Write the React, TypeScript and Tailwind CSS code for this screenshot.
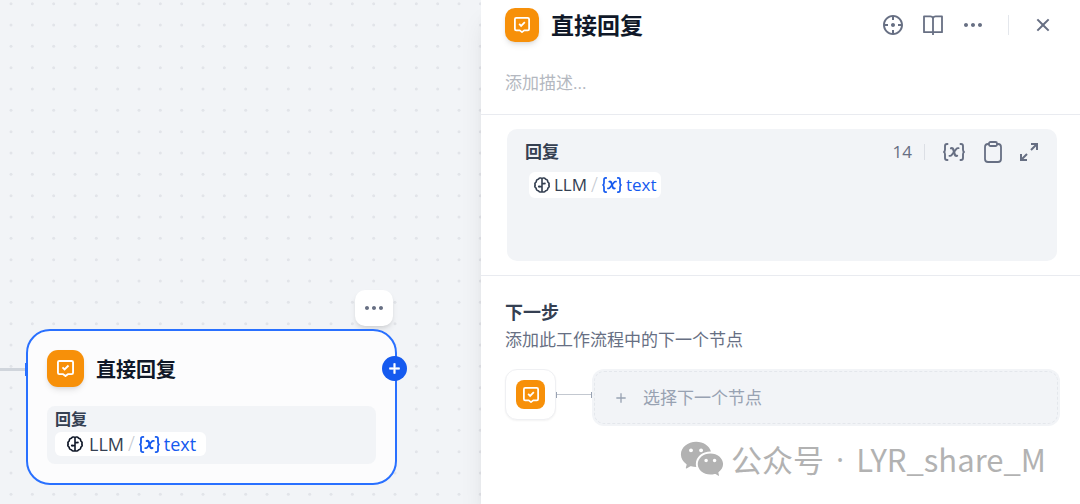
import type { ReactNode } from "react";
import {
  RiAddLine,
  RiCloseLine,
  RiCrosshairLine,
  RiMoreFill,
  RiWechatFill,
} from "react-icons/ri";

type IconProps = { className?: string };

function AnswerIcon({ className }: IconProps) {
  return (
    <svg viewBox="0 0 18 18" fill="none" stroke="currentColor" strokeWidth="2" strokeLinejoin="round" strokeLinecap="round" className={className}>
      <path d="M2.500 1h13A1.500 1.500 0 0 1 17 2.500v11a1.500 1.500 0 0 1-1.500 1.500h-4L9 17l-2.500-2h-4A1.500 1.500 0 0 1 1 13.500v-11A1.500 1.500 0 0 1 2.500 1z" />
      <path d="M5.800 7.800l2.200 2.200 4.200-4.200" strokeLinecap="butt" strokeLinejoin="miter" />
    </svg>
  );
}

function BrainIcon({ className }: IconProps) {
  return (
    <svg viewBox="0 0 16 16" fill="none" stroke="currentColor" strokeWidth="1.600" strokeLinejoin="round" className={className}>
      <path d="M8 1.400c-1.300-.9-3 -.3-3.500.8-1.500.1-2.400 1.300-2.200 2.600C1 5.700.6 7 1.200 8c-.6 1.100-.2 2.500 1 3.200-.1 1.300.9 2.500 2.300 2.600.6 1.100 2.200 1.700 3.500.8 1.300.9 2.900.3 3.500-.8 1.400-.1 2.400-1.300 2.300-2.600 1.200-.7 1.600-2.100 1-3.200.6-1 .2-2.300-1.100-3.200.2-1.300-.7-2.500-2.200-2.600C11 1.100 9.300.5 8 1.400z" />
      <path d="M8 1.400v13.200M8 6.600h2.200M8 9.600H5.200" />
      <circle cx="10.800" cy="6.600" r="1" fill="currentColor" stroke="none" />
      <circle cx="5" cy="9.600" r="1.100" fill="currentColor" stroke="none" />
    </svg>
  );
}

function VariableIcon({ className }: IconProps) {
  return (
    <svg viewBox="0 0 22 18" fill="none" stroke="currentColor" strokeWidth="1.900" strokeLinecap="round" strokeLinejoin="round" className={className}>
      <path d="M4.500 1H4a2 2 0 0 0-2 2v3.500C2 8 1.600 8.600 1 9c.6.400 1 1 1 2.500V15a2 2 0 0 0 2 2h.5" />
      <path d="M17.500 1h.5a2 2 0 0 1 2 2v3.500c0 1.500.4 2.100 1 2.500-.6.400-1 1-1 2.500V15a2 2 0 0 1-2 2h-.5" />
      <path d="M8 5.200c1.300-.3 2 .2 2.300 1.200l1.500 5.200c.3 1 1 1.500 2.300 1.200" strokeWidth="2.200" />
      <path d="M15.600 5.200c-1-.3-1.800.1-2.400.9l-4.400 5.800c-.6.800-1.400 1.200-2.400.9" strokeWidth="1.800" />
    </svg>
  );
}

function BookIcon({ className }: IconProps) {
  return (
    <svg viewBox="0 0 20 20" fill="none" stroke="currentColor" strokeWidth="1.800" strokeLinejoin="round" className={className}>
      <path d="M10 3.200C9.600 2 8.600 1.400 7.400 1.400H1v15.800h9h9V1.400h-6.400c-1.200 0-2.200.6-2.600 1.800zM10 3v17" />
    </svg>
  );
}

function ClipboardIcon({ className }: IconProps) {
  return (
    <svg viewBox="0 0 18 22" fill="none" stroke="currentColor" strokeWidth="1.800" strokeLinejoin="round" className={className}>
      <path d="M5 3H4a3 3 0 0 0-3 3v12a3 3 0 0 0 3 3h10a3 3 0 0 0 3-3V6a3 3 0 0 0-3-3h-1" />
      <rect x="5" y="1" width="8" height="4" rx="1.500" />
    </svg>
  );
}

function ExpandIcon({ className }: IconProps) {
  return (
    <svg viewBox="0 0 18 18" fill="none" stroke="currentColor" strokeWidth="2" className={className}>
      <path d="M11 1h6v6M17 1l-6 6M7 17H1v-6M1 17l6-6" />
    </svg>
  );
}

// 3x3 dots per 64px tile
function DotGrid() {
  const columns = [11, 32.33, 53.67];
  const rows = [3.67, 25, 46.33];
  return (
    <svg className="absolute inset-0 size-full" aria-hidden="true">
      <pattern id="dots" width="64" height="64" patternUnits="userSpaceOnUse">
        {columns.map((x) =>
          rows.map((y) => <circle key={`${x}-${y}`} cx={x} cy={y} r="1.500" fill="#e2e4e9" />),
        )}
      </pattern>
      <rect width="100%" height="100%" fill="url(#dots)" />
    </svg>
  );
}

function IconButton({ label, children }: { label: string; children: ReactNode }) {
  return (
    <button type="button" aria-label={label} className="flex size-6 items-center justify-center">
      {children}
    </button>
  );
}

function WorkflowNode() {
  return (
    <>
      <div className="absolute top-[368px] left-0 h-[3px] w-[26px] bg-[#d0d5dc]" />
      <div className="absolute top-[363px] left-[25px] h-[13px] w-1 bg-[#2970ff]" />
      <button
        type="button"
        aria-label="更多"
        className="absolute top-[290px] left-[355px] flex h-9 w-[38px] items-center justify-center rounded-[10px] bg-white text-[#676f83] shadow-md"
      >
        <RiMoreFill className="size-6" />
      </button>
      <section className="absolute top-[329px] left-[26px] w-[371px] rounded-3xl border-2 border-[#2970ff] bg-[#fcfcfd] p-[19px]">
        <div className="flex items-center gap-3">
          <span className="flex size-[37px] items-center justify-center rounded-[11px] bg-[#f79009] text-white shadow-md">
            <AnswerIcon className="size-[17px]" />
          </span>
          <h2 className="pt-[2px] text-xl leading-7 font-bold text-[#101828]">直接回复</h2>
        </div>
        <div className="mt-[19px] rounded-lg bg-[#f2f4f7] px-2 pt-[2px] pb-2">
          <div className="text-base leading-[22px] font-bold text-[#354052]">回复</div>
          <div className="mt-[2px] flex h-6 w-fit items-center rounded-md bg-white pr-[10px] pl-3 text-lg text-[#354052]">
            <BrainIcon className="mr-[6px] size-4 text-[#101828]" />
            LLM
            <span className="mx-1 text-xl font-light text-[#c3c8d0]">/</span>
            <VariableIcon className="mr-1 h-[17px] w-[21px] text-[#155aef]" />
            <span className="text-[#155aef]">text</span>
          </div>
        </div>
        <button
          type="button"
          aria-label="添加节点"
          className="absolute top-[25px] -right-3 flex size-[25px] items-center justify-center rounded-full bg-[#155aef] text-white"
        >
          <RiAddLine className="size-[17px]" stroke="currentColor" strokeWidth="1" />
        </button>
      </section>
    </>
  );
}

function PanelHeader() {
  return (
    <header className="border-b border-[#e9ebf0] pt-[7px] pr-[25px] pb-[19px] pl-6">
      <div className="flex h-[35px] items-center">
        <span className="flex size-[34px] items-center justify-center rounded-[10px] bg-[#f79009] text-white shadow-md">
          <AnswerIcon className="size-4" />
        </span>
        <h1 className="ml-3 text-[23px] leading-8 font-bold text-[#101828]">直接回复</h1>
        <div className="ml-auto flex items-center gap-4 text-[#676f83]">
          <IconButton label="定位">
            <RiCrosshairLine className="size-6" />
          </IconButton>
          <IconButton label="帮助文档">
            <BookIcon className="size-5" />
          </IconButton>
          <IconButton label="更多">
            <RiMoreFill className="size-6" />
          </IconButton>
        </div>
        <div className="mr-[22px] ml-[23px] h-5 w-px bg-[#e4e7ec]" />
        <div className="flex text-[#676f83]">
          <IconButton label="关闭">
            <RiCloseLine className="size-6" />
          </IconButton>
        </div>
      </div>
      <input
        aria-label="描述"
        placeholder="添加描述..."
        className="mt-[29px] block h-6 w-full bg-transparent text-[17px] outline-none placeholder:text-[#b4b8c0]"
      />
    </header>
  );
}

function ReplyEditor() {
  return (
    <section className="border-b border-[#e9ebf0] py-[14px] pr-[23px] pl-[26px]">
      <div className="h-33 rounded-[10px] bg-[#f2f4f7] pt-[11px] pr-[19px] pl-[18px]">
        <div className="flex h-6 items-center text-[#676f83]">
          <h3 className="text-[17px] font-bold text-[#354052]">回复</h3>
          <span className="ml-auto text-[17px]">14</span>
          <div className="mr-[17px] ml-3 h-4 w-px bg-[#dcdfe5]" />
          <div className="flex items-center gap-[15px]">
            <IconButton label="插入变量">
              <VariableIcon className="h-[18px] w-[22px]" />
            </IconButton>
            <IconButton label="复制">
              <ClipboardIcon className="h-[22px] w-[18px]" />
            </IconButton>
            <button type="button" aria-label="展开" className="flex h-6 items-center">
              <ExpandIcon className="size-[18px]" />
            </button>
          </div>
        </div>
        <div className="mt-2 ml-1 flex h-[26px] w-fit items-center rounded-md bg-white px-[5px] text-[17px] text-[#354052]">
          <BrainIcon className="mr-1 size-4" />
          LLM
          <span className="mx-1 text-xl font-light text-[#c3c8d0]">/</span>
          <VariableIcon className="mr-1 h-4 w-5 text-[#155aef]" />
          <span className="text-[#155aef]">text</span>
        </div>
      </div>
    </section>
  );
}

function NextStep() {
  return (
    <section className="pt-6 pr-5 pl-6">
      <h3 className="text-lg leading-6 font-bold text-[#354052]">下一步</h3>
      <p className="mt-1 text-[17px] leading-6 text-[#676f83]">添加此工作流程中的下一个节点</p>
      <div className="mt-[17px] flex">
        <div className="flex size-[51px] items-center justify-center rounded-xl border border-[#eff0f3] bg-white shadow-xs">
          <span className="flex size-[29px] items-center justify-center rounded-lg bg-[#f79009] text-white">
            <AnswerIcon className="size-4" />
          </span>
        </div>
        <div className="flex h-[51px] w-9 items-center text-[#98a2b2]">
          <div className="h-[6px] w-px bg-current" />
          <div className="h-px flex-1 bg-[#c3c8d0]" />
          <div className="h-[6px] w-px bg-current" />
        </div>
        <button type="button" className="flex-1 rounded-xl bg-[#f2f4f7] p-[2px] text-[#98a2b2]">
          <span className="flex h-[53px] items-center rounded-[10px] border border-dashed border-[#e4e7ec] pl-[18px] text-[17px]">
            <RiAddLine className="mr-[14px] size-4" />
            选择下一个节点
          </span>
        </button>
      </div>
    </section>
  );
}

export default function App() {
  return (
    <div className="grid min-h-screen grid-cols-[481fr_599fr] overflow-hidden bg-white font-['Open_Sans','Noto_Sans_CJK_SC',sans-serif]">
      <main className="relative overflow-hidden bg-[#f2f4f7]">
        <DotGrid />
        <WorkflowNode />
      </main>
      <aside className="relative bg-white shadow-xl">
        <PanelHeader />
        <ReplyEditor />
        <NextStep />
        <div className="mt-[13px] flex h-10 items-center justify-end pr-[34px] font-['Noto_Sans_CJK_SC',sans-serif] text-[31px] leading-10 text-[#b2b2b2]">
          <RiWechatFill className="mr-[6px] size-[46px]" />
          <span>公众号</span>
          <span className="mx-3 font-['Open_Sans',sans-serif]">·</span>
          <span>LYR_share_M</span>
        </div>
      </aside>
    </div>
  );
}
